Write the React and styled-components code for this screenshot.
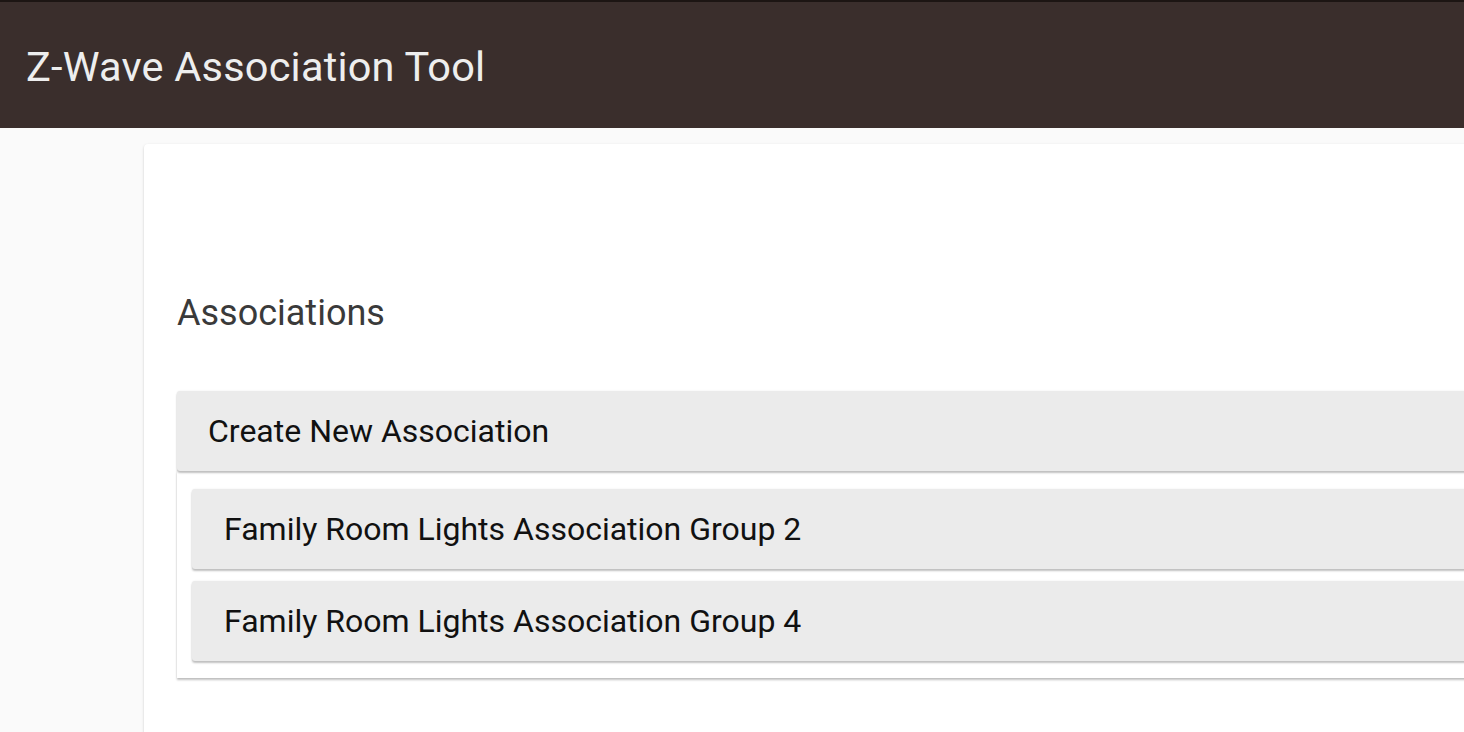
import styled, { createGlobalStyle } from 'styled-components';

const GlobalStyle = createGlobalStyle`
	html, body {
		margin: 0;
		padding: 0;
		background: #fafafa;
		overflow: hidden;
		font-family: Roboto, "Liberation Sans", sans-serif;
	}
`;

const Page = styled.div`
	min-height: 732px;
	background: #fafafa;
`;

const Header = styled.header`
	height: 126px;
	background: #3a2e2c;
	border-top: 2px solid #1c1513;
	display: flex;
	align-items: center;
	padding: 2px 26px 0;
	box-sizing: border-box;
	height: 128px;
`;

const HeaderTitle = styled.h1`
	margin: 0;
	font-size: 41.5px;
	font-weight: 400;
	color: #eeeeee;
	letter-spacing: 0.2px;
`;

const Main = styled.main`
	padding: 16px 0 0 144px;
`;

const Card = styled.section`
	width: 1400px;
	background: #fff;
	border-radius: 4px;
	box-shadow: 0 1px 3px rgba(0, 0, 0, 0.12), 0 1px 2px rgba(0, 0, 0, 0.08);
	padding: 139px 0 60px 33px;
`;

const Heading = styled.h2`
	margin: 0 0 48px 0;
	font-size: 36px;
	font-weight: 400;
	color: #3a3a3a;
	line-height: 60px;
`;

const Panel = styled.div`
	height: 80px;
	display: flex;
	align-items: center;
	padding-left: ${(p) => p.$indent || 31}px;
	background: #ebebeb;
	border-radius: 3px;
	box-shadow: 0 2px 2px rgba(0, 0, 0, 0.24), 0 0 2px rgba(0, 0, 0, 0.08);
	font-size: 32px;
	color: #111;
	position: relative;
	z-index: 1;
`;

const List = styled.div`
	background: #fff;
	padding: 18px 0 17px 15px;
	display: flex;
	flex-direction: column;
	gap: 12px;
	box-shadow: 0 2px 2px rgba(0, 0, 0, 0.24), 0 0 2px rgba(0, 0, 0, 0.08);
`;

const groups = [
	'Family Room Lights Association Group 2',
	'Family Room Lights Association Group 4',
];

export default function App() {
	return (
		<Page>
			<GlobalStyle />
			<Header>
				<HeaderTitle>Z-Wave Association Tool</HeaderTitle>
			</Header>
			<Main>
				<Card>
					<Heading>Associations</Heading>
					<Panel>Create New Association</Panel>
					<List>
						{groups.map((g) => (
							<Panel key={g} $indent={32}>
								{g}
							</Panel>
						))}
					</List>
				</Card>
			</Main>
		</Page>
	);
}
